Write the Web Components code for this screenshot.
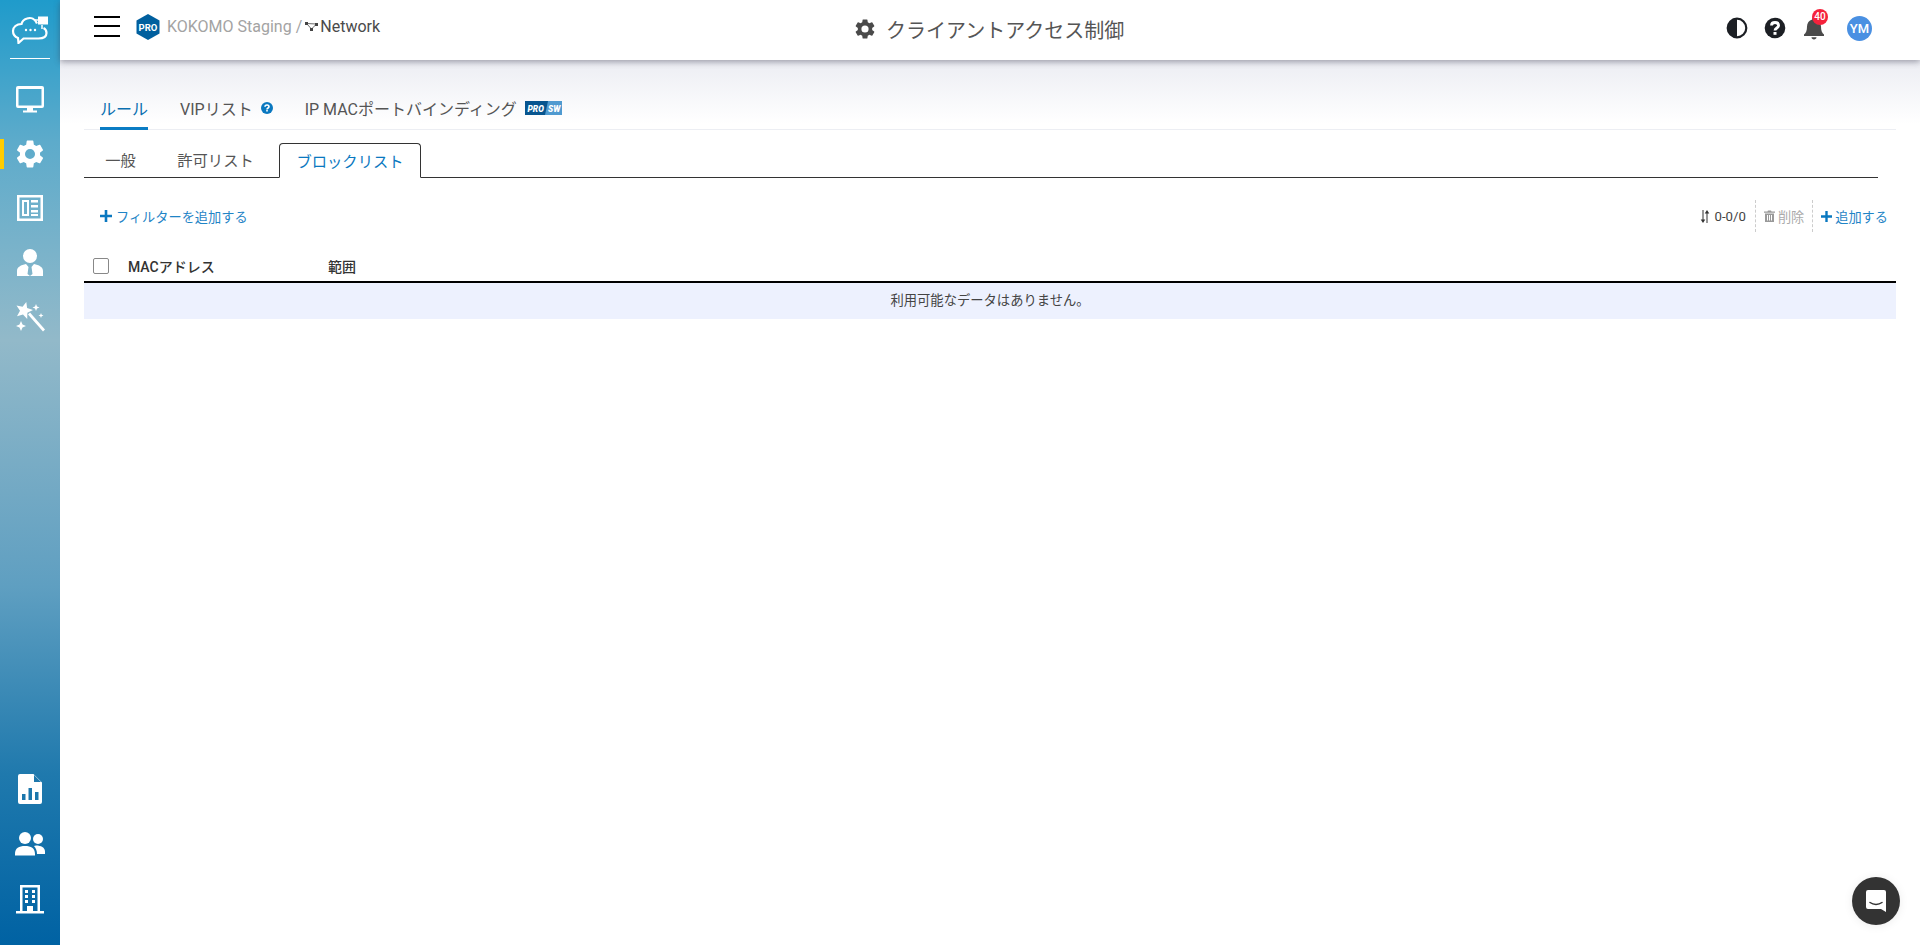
<!DOCTYPE html>
<html lang="ja"><head><meta charset="utf-8"><title>クライアントアクセス制御</title>
<style>
html,body{margin:0;height:945px;overflow:hidden;background:#fff;font-family:Roboto,"Noto Sans CJK JP",sans-serif;}
body{display:flex}
</style></head><body>
<app-sidebar></app-sidebar>
<main-area></main-area>
<chat-fab></chat-fab>
<script>
function def(name, html){
  customElements.define(name, class extends HTMLElement{
    constructor(){super();this.attachShadow({mode:'open'}).innerHTML=html;}
  });
}
const CJK='Roboto,"Noto Sans CJK JP",sans-serif';
const gear='M19.14 12.94c.04-.3.06-.61.06-.94s-.02-.64-.07-.94l2.03-1.58a.5.5 0 0 0 .12-.61l-1.92-3.32a.5.5 0 0 0-.59-.22l-2.39.96a7 7 0 0 0-1.62-.94l-.36-2.54a.48.48 0 0 0-.48-.41h-3.84a.48.48 0 0 0-.47.41l-.36 2.54c-.59.24-1.13.57-1.62.94l-2.39-.96a.49.49 0 0 0-.59.22L2.74 8.87a.48.48 0 0 0 .12.61l2.03 1.58c-.05.3-.09.63-.09.94s.02.64.07.94l-2.03 1.58a.5.5 0 0 0-.12.61l1.92 3.32c.12.22.37.29.59.22l2.39-.96c.5.38 1.03.7 1.62.94l.36 2.54c.05.24.24.41.48.41h3.84c.24 0 .44-.17.47-.41l.36-2.54c.59-.24 1.13-.56 1.62-.94l2.39.96c.22.08.47 0 .59-.22l1.92-3.32a.48.48 0 0 0-.12-.61zM12 15.6a3.6 3.6 0 1 1 0-7.2 3.6 3.6 0 0 1 0 7.2z';

def('app-sidebar',`<style>
:host{display:flex;flex-direction:column;align-items:center;width:60px;flex:none;height:945px;position:relative;
background:linear-gradient(180deg,#1f9bcb 0%,#5dabcb 15%,#92b9c9 36%,#5f9fc1 62%,#1f79ad 82%,#0062a3 100%);}
.logo{height:58px;display:flex;align-items:center;justify-content:center;width:100%;}
.rule{width:40px;height:1px;background:#fff;flex:none}
.top{display:flex;flex-direction:column;gap:24px;margin-top:26px;align-items:center}
.bot{display:flex;flex-direction:column;gap:25px;margin-top:auto;margin-bottom:31px;align-items:center}
svg{display:block;fill:#fff}
.i{width:30px;height:30px}
.person{margin-top:1px}
.mark{position:absolute;left:0;top:139px;width:4px;height:30px;background:#fc0}
</style>
<div class="logo"><svg width="38" height="30" viewBox="0 0 38 30"><path fill="none" stroke="#fff" stroke-width="2.2" d="M26 9.500C24 5 20 3 16 4.500 13 5.500 11 7.500 10.500 10 5.500 10 2 13 2 17c0 3.500 2.500 6 5 7l.5 5 5-4.500h15c4.500 0 8-1.500 8-5.500 0-2.500-1-4-3-5"/><rect x="27" y="2.500" width="10" height="8" fill="#fff"/><path fill="none" stroke="#fff" stroke-width="1.500" d="M24 6h4M31 11v4"/><circle cx="15" cy="16" r="1.200"/><circle cx="19.500" cy="16" r="1.200"/><circle cx="24" cy="16" r="1.200"/></svg></div>
<div class="rule"></div>
<div class="mark"></div>
<div class="top">
<svg class="i" viewBox="0 0 30 30"><path fill-rule="evenodd" d="M3 1h24a2 2 0 0 1 2 2v18a2 2 0 0 1-2 2H18v2.500h4v2H8v-2h4V23H3a2 2 0 0 1-2-2V3a2 2 0 0 1 2-2zm.5 3v16.500h23V4z"/></svg>
<svg class="i" viewBox="0 0 24 24"><path transform="translate(-1.400 -1.400) scale(1.117)" fill-rule="evenodd" d="${gear}"/></svg>
<svg class="i" viewBox="0 0 30 30"><path fill-rule="evenodd" d="M2 2h26v26H2zm2.500 2.500v21h21v-21zM7 7h7v16H7zm2 2v12h3V9zm7-2h7v2.500h-7zm0 5h7v2.500h-7zm0 5h7v2.500h-7zm0 4h7v2h-7z"/></svg>
<svg class="i person" viewBox="0 0 30 30"><circle cx="15" cy="8" r="7"/><path d="M2 28v-5c0-4 4-6 9-7l2.500 3-1 7 2.500 2 2.500-2-1-7 2.500-3c5 1 9 3 9 7v5z"/></svg>
<svg class="i" viewBox="0 0 30 30"><path d="M11.300 0L12.100 6 18 8 12.400 10.700 12.200 16.900 8 12.400 2 14.200 5 8.700 1.500 3.600 7.600 4.800zM13 12.500l2-2L30 27.500 28 29.500zM21 2l1 2.500 2.500 1-2.500 1-1 2.500-1-2.500-2.500-1 2.500-1zM26 11l.7 1.800 1.800.7-1.800.7-.7 1.800-.7-1.800-1.800-.7 1.800-.7zM6 19l1.500 3.500L11 24l-3.500 1.500L6 29l-1.500-3.500L1 24l3.500-1.500z"/></svg>
</div>
<div class="bot">
<svg class="i" viewBox="0 0 30 30"><path fill-rule="evenodd" d="M5 0h13.500L27 8.500V28a2 2 0 0 1-2 2H5a2 2 0 0 1-2-2V2a2 2 0 0 1 2-2zm14 1v7h7zM7 20v6h3.500v-6zm6.500-6v12H17V14zM20 18v8h3.500v-8z"/></svg>
<svg class="i" viewBox="0 0 30 30"><circle cx="10" cy="9" r="6"/><circle cx="23" cy="10" r="5"/><path d="M0 25c0-6 4-8 10-8s10 2 10 8v1.500H0zM21 16.500c5 0 9 2 9 6v2.500h-8c0-3-1-6-3-8z"/></svg>
<svg class="i" viewBox="0 0 30 30"><path fill-rule="evenodd" d="M5 1h20v26h4v2.500H1V27h4zm2.500 2.500V27H12v-5h6v5h4.500V3.500zM10 6h3v3h-3zm7 0h3v3h-3zm-7 5h3v3h-3zm7 0h3v3h-3zm-7 5h3v3h-3zm7 0h3v3h-3z"/></svg>
</div>`);

def('app-header',`<style>
:host{display:flex;align-items:center;height:60px;flex:none;background:#fff;position:relative;z-index:2;box-shadow:0 2px 6px rgba(60,60,80,.45);font-family:${CJK};}
.burger{width:26px;margin-left:34px;display:flex;flex-direction:column;gap:7.500px;margin-top:-8px}
.burger i{display:block;height:2px;background:#000}
.hex{margin-left:16px;margin-top:-6px;display:block}
.crumb{margin-left:7px;margin-top:-8px;font-size:16px;color:#a3a3a3;display:flex;align-items:center;white-space:nowrap;width:240px}
.crumb b{font-weight:400;color:#4a4a4a;font-size:16px}
.crumb svg{margin:0 2px 0 3px}
.title{position:absolute;left:793px;top:0;height:58px;display:flex;align-items:center;gap:9px;font-size:20px;color:#555;white-space:nowrap}
.right{position:absolute;left:1655px;top:-1px;width:200px;height:58px}
.tools{display:flex;align-items:center;gap:16px;height:58px;padding-left:11px}
svg{display:block}
.bell{position:relative;width:26px;height:26px;margin-left:-1px}
.badge{position:absolute;left:11px;top:-6px;width:16px;height:16px;border-radius:50%;background:#f5223c;color:#fff;font:500 10px/16px Roboto,sans-serif;text-align:center}
.av{width:25px;height:25px;border-radius:50%;background:#4a90e2;color:#fff;font:500 13px/25px Roboto,sans-serif;text-align:center;margin-left:4px}
</style>
<div class="burger"><i></i><i></i><i></i></div>
<svg class="hex" width="24" height="26" viewBox="0 0 24 26"><path fill="#005f9e" d="M12 0l11.500 6.500v13L12 26 .5 19.500v-13z"/><text x="12" y="16.500" text-anchor="middle" font-family="Roboto,sans-serif" font-size="9.500" font-weight="700" fill="#fff">PRO</text></svg>
<div class="crumb"><span>KOKOMO Staging /</span><svg width="13" height="9" viewBox="0 0 13 9"><path fill="none" stroke="#444" stroke-width=".8" d="M1.500 1.500l5 5.500 5-5z"/><rect x="0" y="0" width="3" height="3" fill="#444"/><rect x="10" y="1" width="3" height="3" fill="#444"/><rect x="5" y="6" width="3" height="3" fill="#444"/></svg><b>Network</b></div>
<div class="title"><svg width="24" height="24" viewBox="0 0 24 24"><path fill="#4a4a4a" fill-rule="evenodd" d="${gear}"/></svg><span>クライアントアクセス制御</span></div>
<div class="right"><div class="tools">
<svg width="22" height="22" viewBox="0 0 22 22"><circle cx="11" cy="11" r="9.300" fill="#fff" stroke="#1c1f24" stroke-width="2.200"/><path fill="#1c1f24" d="M11 1.500a9.500 9.500 0 0 0 0 19z"/></svg>
<svg width="22" height="22" viewBox="0 0 22 22"><circle cx="11" cy="11" r="10.300" fill="#1c1f24"/><path fill="none" stroke="#fff" stroke-width="2.800" d="M7.500 8.500C7.500 6.500 9 5.500 11 5.500s3.600 1.200 3.600 3c0 2.500-3.600 2.500-3.600 5"/><rect x="9.500" y="15" width="3" height="2.800" fill="#fff"/></svg>
<div class="bell"><svg width="26" height="26" viewBox="0 0 26 26"><path fill="#4a4a4a" d="M13 2c1 0 1.800.8 1.800 1.800v.6c3.200.9 5.200 3.700 5.200 7.100 0 4 1 6.500 3 8V21H3v-1.500c2-1.500 3-4 3-8 0-3.400 2-6.200 5.200-7.100v-.6C11.200 2.800 12 2 13 2zM10.500 22.300h5c0 1.300-1.100 2.200-2.500 2.200s-2.500-.9-2.500-2.200z"/></svg><span class="badge">40</span></div>
<div class="av">YM</div>
</div></div>`);

def('rule-tabs',`<style>
:host{display:flex;align-items:stretch;height:50px;margin:0 24px;border-bottom:1px solid #eceef3;font-size:16px;color:#555;box-sizing:content-box}
a{display:flex;align-items:center;white-space:nowrap;position:relative;padding-top:7px;box-sizing:border-box}
.on{color:#0a6fb0;width:48px;margin-left:16px;justify-content:center}
.on::after{content:"";position:absolute;left:0;right:0;bottom:-1px;height:3px;background:#0a7cc4}
.v{margin-left:32px;gap:5px}
.m{margin-left:32px;gap:8px}
svg{display:block}
</style>
<a class="on">ルール</a>
<a class="v">VIPリスト <svg width="12" height="12" viewBox="0 0 12 12" style="margin-left:3px"><circle cx="6" cy="6" r="6" fill="#0a78c0"/><path fill="none" stroke="#fff" stroke-width="1.600" d="M4 4.700C4 3.500 5 3 6 3s2 .7 2 1.700C8 6 6 6 6 7.500"/><rect x="5.200" y="8" width="1.600" height="1.500" fill="#fff"/></svg></a>
<a class="m">IP MACポートバインディング <svg width="37" height="14" viewBox="0 0 37 14"><rect width="37" height="14" fill="#4f9ad0"/><path fill="#07558f" d="M0 0h23l-3 14H0z"/><text x="2.500" y="10.500" font-family="Roboto,sans-serif" font-size="8.500" font-weight="900" font-style="italic" fill="#fff">PRO</text><text x="23" y="10.500" font-family="Roboto,sans-serif" font-size="8.500" font-weight="900" font-style="italic" fill="#fff">SW</text></svg></a>`);

def('sub-tabs',`<style>
:host{display:flex;align-items:flex-end;height:35px;margin:12px 42px 0 24px;border-bottom:1px solid #333;font-size:15.300px;color:#555}
a{display:flex;align-items:center;justify-content:center;height:34px;white-space:nowrap;box-sizing:border-box;padding-bottom:2px}
.g{width:73px}
.p{width:117px}
.b{width:142px;height:35px;margin-bottom:-1px;border:1px solid #333;border-bottom:1px solid #fff;border-radius:4px 4px 0 0;color:#0a78c0;margin-left:5px;padding-bottom:2px;background:#fff}
</style><a class="g">一般</a><a class="p">許可リスト</a><a class="b">ブロックリスト</a>`);

def('tool-bar',`<style>
:host{display:flex;align-items:center;height:44px;margin:16px 8px 0 40px;padding-right:24px;font-size:13.200px;color:#1f84c6;}
.grow{flex:1;display:flex;align-items:center;gap:4px}
.r{display:flex;align-items:center;height:32px}
.sep{border-left:1px dashed #ccc;height:32px;margin:0 8px}
.it{display:flex;align-items:center;gap:3px;white-space:nowrap}
.count{color:#444;gap:5px;margin-right:1px}.del{color:#aaa}
svg{display:block}
</style>
<div class="grow"><svg width="12" height="12" viewBox="0 0 12 12"><path fill="#0a78c0" d="M4.700 0h2.600v4.700H12v2.600H7.300V12H4.700V7.300H0V4.700h4.700z"/></svg><span>フィルターを追加する</span></div>
<div class="r">
<span class="it count"><svg width="10" height="13" viewBox="0 0 10 13"><path fill="#333" d="M2 0h1v9.500h1.800L2.500 13 .2 9.500H2zM7 13H6V3.500H4.200L6.500 0l2.300 3.500H7z" transform="translate(.5 0)"/></svg>0-0/0</span>
<span class="sep"></span>
<span class="it del"><svg width="11" height="12" viewBox="0 0 11 12"><path fill="#999" fill-rule="evenodd" d="M0 1.500h3.500L4 .5h3l.5 1H11v1.300H0zM1 3.500h9V12H1zM3 5v5.500h1V5zm2 0v5.500h1V5zm2 0v5.500h1V5z"/></svg>削除</span>
<span class="sep"></span>
<span class="it"><svg width="11" height="11" viewBox="0 0 12 12"><path fill="#0a78c0" d="M4.700 0h2.600v4.700H12v2.600H7.300V12H4.700V7.300H0V4.700h4.700z"/></svg>追加する</span>
</div>`);

def('data-table',`<style>
:host{display:block;margin:11px 24px 0;font-size:14px;color:#333}
.head{display:flex;align-items:center;height:30px;border-bottom:2px solid #000;padding-top:2px}
.cb{width:14px;height:14px;border:1px solid #888;border-radius:2px;margin-left:9px;flex:none}
.c1{margin-left:19px;width:200px;font-weight:500}
.c2{font-weight:500}
.empty{height:36px;box-sizing:border-box;padding-bottom:3px;background:#edf1fe;display:flex;align-items:center;justify-content:center;font-size:13.300px;color:#444}
</style>
<div class="head"><span class="cb"></span><span class="c1">MACアドレス</span><span class="c2">範囲</span></div>
<div class="empty">利用可能なデータはありません。</div>`);

def('main-area',`<style>
:host{display:flex;flex-direction:column;flex:1;min-width:0;height:945px;background:#fff;font-family:${CJK};}
.grad{background:linear-gradient(180deg,#ecedf3 0,#fff 64px);padding-top:19px;flex:1}
</style>
<app-header></app-header>
<div class="grad"><rule-tabs></rule-tabs><sub-tabs></sub-tabs><tool-bar></tool-bar><data-table></data-table></div>`);

def('chat-fab',`<style>
:host{position:fixed;right:20px;bottom:20px;width:48px;height:48px;border-radius:50%;background:#333;display:flex;align-items:center;justify-content:center;box-shadow:0 1px 10px rgba(0,0,0,.08)}
svg{display:block}
</style><svg width="22" height="24" viewBox="0 0 22 24"><path fill="#fff" fill-rule="evenodd" d="M3 1h16a2 2 0 0 1 2 2v20l-5-3H3a2 2 0 0 1-2-2V3a2 2 0 0 1 2-2z"/><path fill="none" stroke="#333" stroke-width="1.500" stroke-linecap="round" d="M5 13.500c3.500 2.500 8.500 2.500 12 0"/></svg>`);
</script>
</body></html>
